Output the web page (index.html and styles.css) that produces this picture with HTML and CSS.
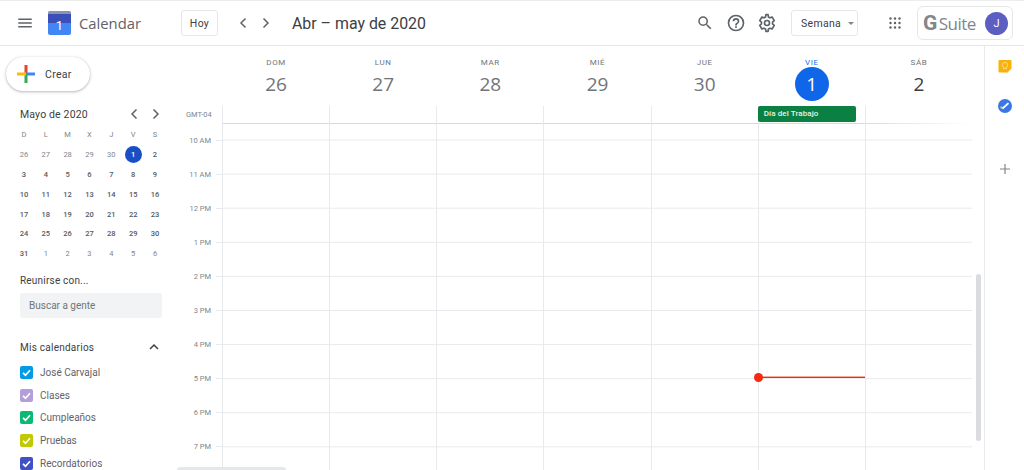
FILE: index.html
```html
<!DOCTYPE html>
<html lang="es">
<head>
<meta charset="utf-8">
<title>Calendar</title>
<link rel="stylesheet" href="styles.css">
</head>
<body>
<div class="app">
  <header class="topbar">
    <div class="brand">
      <button class="icon-btn menu" aria-label="Menú">
        <svg viewBox="0 0 24 24" width="18" height="18"><path d="M3 18h18v-2H3v2zm0-5h18v-2H3v2zm0-7v2h18V6H3z" fill="#5f6368"/></svg>
      </button>
      <svg class="logo" viewBox="0 0 23 24" width="23" height="24">
        <path d="M0 3h23v10H0z" fill="#3a50b8"/>
        <path d="M0 12h23v10a2 2 0 0 1-2 2H2a2 2 0 0 1-2-2z" fill="#4285f4"/>
        <path d="M1.500 0h20A1.500 1.500 0 0 1 23 1.500V3H0V1.500A1.500 1.500 0 0 1 1.500 0z" fill="#8a94ad"/>
        <text x="11.500" y="18.500" class="logo-num">1</text>
      </svg>
      <span class="brand-name">Calendar</span>
    </div>
    <button class="outline-btn today">Hoy</button>
    <div class="nav-arrows">
      <svg viewBox="0 0 10 14" width="10" height="14"><path d="M7.500 2.500 3 7l4.500 4.500" fill="none" stroke="#5f6368" stroke-width="1.500"/></svg>
      <svg viewBox="0 0 10 14" width="10" height="14"><path d="M2.500 2.500 7 7l-4.500 4.500" fill="none" stroke="#5f6368" stroke-width="1.500"/></svg>
    </div>
    <h1 class="range">Abr – may de 2020</h1>
    <div class="tools">
      <svg viewBox="0 0 24 24" width="18" height="18"><path d="M15.500 14h-.79l-.28-.27A6.470 6.470 0 0 0 16 9.500 6.500 6.500 0 1 0 9.500 16c1.610 0 3.090-.59 4.230-1.570l.27.28v.79l5 4.990L20.490 19l-4.990-5zm-6 0C7.010 14 5 11.990 5 9.500S7.010 5 9.500 5 14 7.010 14 9.500 11.990 14 9.500 14z" fill="#5f6368"/></svg>
      <svg viewBox="0 0 24 24" width="20" height="20"><path d="M11 18h2v-2h-2zm1-16a10 10 0 1 0 0 20 10 10 0 0 0 0-20zm0 18a8 8 0 1 1 0-16 8 8 0 0 1 0 16zm0-14a4 4 0 0 0-4 4h2a2 2 0 1 1 4 0c0 2-3 1.750-3 5h2c0-2.250 3-2.500 3-5a4 4 0 0 0-4-4z" fill="#5f6368"/></svg>
      <svg viewBox="0 0 24 24" width="20" height="20"><path d="M13.300 2h-2.600l-.4 2.700c-.7.300-1.300.600-1.900 1.100L5.900 4.800 3.300 9.200l2.100 1.700a8 8 0 0 0 0 2.200l-2.100 1.700 2.600 4.400 2.500-1c.6.500 1.200.8 1.900 1.100l.4 2.700h2.600l.4-2.700c.7-.3 1.300-.6 1.900-1.100l2.500 1 2.600-4.400-2.100-1.700a8 8 0 0 0 0-2.200l2.100-1.700-2.600-4.400-2.500 1c-.6-.5-1.200-.8-1.900-1.100z" fill="none" stroke="#5f6368" stroke-width="2" stroke-linejoin="round"/><circle cx="12" cy="12" r="3" fill="none" stroke="#5f6368" stroke-width="2"/></svg>
    </div>
    <button class="outline-btn view">Semana<span class="caret"></span></button>
    <svg class="apps" viewBox="0 0 12 12" width="12" height="12" fill="#5f6368">
      <circle cx="1.500" cy="1.500" r="1.200"/><circle cx="6" cy="1.500" r="1.200"/><circle cx="10.500" cy="1.500" r="1.200"/>
      <circle cx="1.500" cy="6" r="1.200"/><circle cx="6" cy="6" r="1.200"/><circle cx="10.500" cy="6" r="1.200"/>
      <circle cx="1.500" cy="10.500" r="1.200"/><circle cx="6" cy="10.500" r="1.200"/><circle cx="10.500" cy="10.500" r="1.200"/>
    </svg>
    <div class="account">
      <span class="gsuite"><b>G</b> Suite</span>
      <span class="avatar">J</span>
    </div>
  </header>

  <div class="main">
    <aside class="sidebar">
      <button class="create">
        <svg viewBox="0 0 18 18" width="18" height="18">
          <rect x="7.500" y="0" width="3" height="9" fill="#ea4335"/>
          <rect x="9" y="7.500" width="9" height="3" fill="#4285f4"/>
          <rect x="7.500" y="9" width="3" height="9" fill="#34a853"/>
          <rect x="0" y="7.500" width="9" height="3" fill="#fbbc05"/>
        </svg>
        Crear
      </button>
      <div class="mini-head">
        <span class="mini-title">Mayo de 2020</span>
        <div class="mini-arrows">
          <svg viewBox="0 0 10 14" width="10" height="14"><path d="M7.500 2.500 3 7l4.500 4.500" fill="none" stroke="#5f6368" stroke-width="1.500"/></svg>
          <svg viewBox="0 0 10 14" width="10" height="14"><path d="M2.500 2.500 7 7l-4.500 4.500" fill="none" stroke="#5f6368" stroke-width="1.500"/></svg>
        </div>
      </div>
      <div class="mini-grid">
        <span class="wd">D</span><span class="wd">L</span><span class="wd">M</span><span class="wd">X</span><span class="wd">J</span><span class="wd">V</span><span class="wd">S</span>
        <span class="off">26</span><span class="off">27</span><span class="off">28</span><span class="off">29</span><span class="off">30</span><span class="sel">1</span><span>2</span>
        <span>3</span><span>4</span><span>5</span><span>6</span><span>7</span><span>8</span><span>9</span>
        <span>10</span><span>11</span><span>12</span><span>13</span><span>14</span><span>15</span><span>16</span>
        <span>17</span><span>18</span><span>19</span><span>20</span><span>21</span><span>22</span><span>23</span>
        <span>24</span><span>25</span><span>26</span><span>27</span><span>28</span><span>29</span><span>30</span>
        <span>31</span><span class="off">1</span><span class="off">2</span><span class="off">3</span><span class="off">4</span><span class="off">5</span><span class="off">6</span>
      </div>
      <h2 class="meet-title">Reunirse con...</h2>
      <div class="people">Buscar a gente</div>
      <div class="cal-head">
        <h2>Mis calendarios</h2>
        <svg viewBox="0 0 12 8" width="12" height="8"><path d="M2 6l4-4 4 4" fill="none" stroke="#3c4043" stroke-width="1.500"/></svg>
      </div>
      <ul class="cal-list">
        <li><span class="check c-blue"><svg viewBox="0 0 13 13"><path d="M3 6.800l2.500 2.400L10 4.300" fill="none" stroke="#fff" stroke-width="1.700"/></svg></span>José Carvajal</li>
        <li><span class="check c-purple"><svg viewBox="0 0 13 13"><path d="M3 6.800l2.500 2.400L10 4.300" fill="none" stroke="#fff" stroke-width="1.700"/></svg></span>Clases</li>
        <li><span class="check c-green"><svg viewBox="0 0 13 13"><path d="M3 6.800l2.500 2.400L10 4.300" fill="none" stroke="#fff" stroke-width="1.700"/></svg></span>Cumpleaños</li>
        <li><span class="check c-lime"><svg viewBox="0 0 13 13"><path d="M3 6.800l2.500 2.400L10 4.300" fill="none" stroke="#fff" stroke-width="1.700"/></svg></span>Pruebas</li>
        <li><span class="check c-indigo"><svg viewBox="0 0 13 13"><path d="M3 6.800l2.500 2.400L10 4.300" fill="none" stroke="#fff" stroke-width="1.700"/></svg></span>Recordatorios</li>
      </ul>
    </aside>

    <section class="week">
      <div class="day-heads">
        <div class="day"><span class="dow">DOM</span><span class="num">26</span></div>
        <div class="day"><span class="dow">LUN</span><span class="num">27</span></div>
        <div class="day"><span class="dow">MAR</span><span class="num">28</span></div>
        <div class="day"><span class="dow">MIÉ</span><span class="num">29</span></div>
        <div class="day"><span class="dow">JUE</span><span class="num">30</span></div>
        <div class="day today-col"><span class="dow">VIE</span><span class="num">1</span></div>
        <div class="day future"><span class="dow">SÁB</span><span class="num">2</span></div>
      </div>
      <div class="allday">
        <span class="tz">GMT-04</span>
        <div class="allday-cols">
          <div class="ad"></div><div class="ad"></div><div class="ad"></div><div class="ad"></div><div class="ad"></div>
          <div class="ad"><div class="event">Día del Trabajo</div></div>
          <div class="ad"></div>
        </div>
      </div>
      <div class="timegrid">
        <div class="gutter">
          <span class="hour first">10 AM</span>
          <span class="hour">11 AM</span>
          <span class="hour">12 PM</span>
          <span class="hour">1 PM</span>
          <span class="hour">2 PM</span>
          <span class="hour">3 PM</span>
          <span class="hour">4 PM</span>
          <span class="hour">5 PM</span>
          <span class="hour">6 PM</span>
          <span class="hour">7 PM</span>
        </div>
        <div class="cols">
          <div class="col"></div><div class="col"></div><div class="col"></div><div class="col"></div><div class="col"></div>
          <div class="col current"><div class="now"></div></div>
          <div class="col"></div>
        </div>
        <div class="v-scroll"></div>
        <div class="h-scroll"></div>
      </div>
    </section>

    <aside class="rail">
      <svg class="keep" viewBox="0 0 14 14" width="14" height="14">
        <path d="M1.500 1h11a1 1 0 0 1 1 1v7.500L9.500 13.500H1.500a1 1 0 0 1-1-1V2a1 1 0 0 1 1-1z" fill="#f9b20c"/>
        <path d="M7 3.300a2.700 2.700 0 0 0-1.500 4.900v1.300h3V8.200A2.700 2.700 0 0 0 7 3.300z" fill="none" stroke="#fde293" stroke-width=".9"/>
      </svg>
      <svg class="tasks" viewBox="0 0 14 14" width="14" height="14">
        <circle cx="7" cy="7" r="7" fill="#3b78e7"/>
        <path d="M2.500 7.800l2.200 1.700" stroke="#fbbc04" stroke-width="1.800" fill="none"/>
        <path d="M4.500 9.500l6-5.300" stroke="#fff" stroke-width="1.800" fill="none"/>
      </svg>
      <svg class="add" viewBox="0 0 12 12" width="12" height="12"><path d="M6 1v10M1 6h10" stroke="#80868b" stroke-width="1.200" fill="none"/></svg>
    </aside>
  </div>
</div>
</body>
</html>
```
FILE: styles.css
```css
* { box-sizing: border-box; }
html, body { margin: 0; height: 100%; }
body {
  font-family: Roboto, "Liberation Sans", sans-serif;
  color: #3c4043;
  background: #fff;
  overflow: hidden;
}
button { font: inherit; color: inherit; background: none; border: 0; padding: 0; }
h1, h2, ul { margin: 0; padding: 0; font-weight: 400; list-style: none; }
.app { display: flex; flex-direction: column; height: 470px; border-top: 1px solid #eceded; }

.topbar {
  height: 45px;
  flex: none;
  display: flex;
  align-items: center;
  border-bottom: 1px solid #e6e7e9;
}
.brand { display: flex; align-items: center; width: 181px; flex: none; padding-left: 16px; }
.icon-btn { display: flex; }
.logo { margin-left: 14px; }
.logo-num { font-size: 13px; fill: #fff; text-anchor: middle; font-family: Roboto, sans-serif; }
.brand-name { margin-left: 8px; font-size: 14.800px; color: #5f6368; font-family: "Open Sans", sans-serif; }
.outline-btn {
  display: flex; align-items: center; height: 26px;
  border: 1px solid #e6e7e9; border-radius: 3px;
  font-size: 10.500px; color: #3c4043;
  letter-spacing: .3px;
}
.today { width: 37px; justify-content: center; }
.nav-arrows { display: flex; gap: 13px; margin-left: 20px; }
.range { margin-left: 21px; font-size: 15.900px; color: #3c4043; white-space: nowrap; }
.tools { margin-left: auto; display: flex; align-items: center; gap: 11.500px; }
.view { width: 67px; margin-left: 14px; padding-left: 9px; }
.caret { margin-left: 7px; border: 3px solid transparent; border-top: 3px solid #80868b; margin-top: 3px; }
.apps { margin-left: 31px; }
.account {
  display: flex; align-items: center; justify-content: space-between;
  width: 96px; height: 34px; margin: 0 11px 0 16px; padding: 0 4px 0 5px;
  border: 1px solid #e6e7e9; border-radius: 6px;
}
.gsuite { font-size: 17px; color: #80868b; font-family: "Open Sans", sans-serif; letter-spacing: -.5px; white-space: nowrap; }
.gsuite b { font-family: Roboto, sans-serif; font-size: 21px; line-height: 20px; font-weight: 700; color: #80868b; margin-right: -2px; }
.avatar {
  width: 23px; height: 23px; border-radius: 50%;
  display: flex; align-items: center; justify-content: center;
  background: #5c5ec2; color: #fff; font-size: 11px; flex: none;
}

.main { flex: 1; display: flex; min-height: 0; }

.sidebar { width: 176px; flex: none; padding: 11px 0 0 20px; overflow: hidden; }
.create {
  display: flex; align-items: center; gap: 10px;
  width: 84px; height: 34px; margin-left: -14px; padding-left: 11px;
  border-radius: 17px; background: #fff;
  font-size: 10.500px; color: #3c4043; letter-spacing: .3px;
  box-shadow: 0 1px 3px rgba(60,64,67,.35), 0 0 1px rgba(60,64,67,.2);
}
.mini-head {
  display: flex; align-items: center; justify-content: space-between;
  width: 141px; margin-top: 14px; height: 18px;
}
.mini-title { font-size: 10.500px; color: #3c4043; letter-spacing: .15px; }
.mini-arrows { display: flex; gap: 12px; }
.mini-grid {
  display: grid;
  grid-template-columns: repeat(7, 21.850px);
  grid-auto-rows: 19.900px;
  width: 154px;
  margin: 2px 0 0 -7px;
  font-size: 7.500px;
  font-weight: 500;
  color: #55595d;
  text-align: center;
  line-height: 19.900px;
}
.mini-grid .wd { color: #80868b; font-weight: 400; }
.mini-grid .off { color: #80868b; font-weight: 400; }
.mini-grid .sel {
  width: 17px; height: 17px; line-height: 17px; margin: 1.500px auto 0;
  border-radius: 50%; background: #1a4fc4; color: #fff;
}
.meet-title { margin-top: 10px; font-size: 10px; color: #3c4043; letter-spacing: .2px; line-height: 13px; }
.people {
  width: 142px; height: 25px; margin-top: 6px; padding-left: 9px;
  border-radius: 3px; background: #f1f3f4;
  font-size: 10px; line-height: 25px; color: #70757a;
}
.cal-head {
  display: flex; align-items: center; justify-content: space-between;
  width: 140px; margin-top: 22px; height: 14px;
}
.cal-head h2 { font-size: 10px; letter-spacing: .25px; color: #3c4043; }
.cal-list { margin-top: 7px; }
.cal-list li {
  display: flex; align-items: center; gap: 7px;
  height: 22.700px;
  font-size: 10px; color: #5f6368; white-space: nowrap;
}
.check { width: 13px; height: 13px; border-radius: 2px; display: flex; flex: none; }
.check svg { width: 13px; height: 13px; }
.c-blue { background: #039be5; }
.c-purple { background: #b39ddb; }
.c-green { background: #0bb974; }
.c-lime { background: #c0ca00; }
.c-indigo { background: #3f51c5; }

.week { width: 808px; flex: none; display: flex; flex-direction: column; min-height: 0; }
.day-heads { display: grid; grid-template-columns: repeat(7, 107.150px); height: 60px; margin-left: 46.500px; flex: none; }
.day { display: flex; flex-direction: column; align-items: center; }
.dow { margin-top: 11px; font-size: 8px; letter-spacing: .6px; color: #70757a; line-height: 11px; }
.num { font-size: 19px; line-height: 24px; margin-top: 4px; color: #70757a; font-family: "Open Sans", sans-serif; font-weight: 400; }
.today-col .dow { color: #1a73e8; }
.today-col .num {
  width: 34px; height: 34px; margin-top: -1px; border-radius: 50%;
  background: #0f66e9; color: #fff; line-height: 34px; text-align: center;
}
.future .num { color: #3c4043; }

.allday { display: flex; height: 18px; flex: none; }
.tz { width: 46px; padding: 4px 0 0 10px; font-size: 7.500px; color: #80868b; line-height: 9px; }
.allday-cols {
  flex: none; width: 750px; display: grid; grid-template-columns: repeat(7, 107.150px);
  background: linear-gradient(to right, #d8d9dc 85%, #fff 100%) bottom / 100% 1px no-repeat;
}
.ad { border-left: 1px solid #e8e9ec; }
.event {
  width: 98px; height: 16px; margin-left: -1px; padding-left: 6px;
  border-radius: 2px; background: #0b8043; color: #e7f3ec;
  font-size: 8px; font-weight: 500; line-height: 16px; letter-spacing: .1px;
  white-space: nowrap;
}

.timegrid { flex: 1; display: flex; min-height: 0; position: relative; }
.gutter { width: 46px; flex: none; display: flex; flex-direction: column; }
.hour {
  height: 34.100px; flex: none;
  display: flex; align-items: center; justify-content: flex-end;
  padding-right: 11px;
  font-size: 7.500px; color: #80868b;
  background: linear-gradient(#e8e9ec, #e8e9ec) right 0 top 50% / 6px 1px no-repeat;
}
.hour.first { margin-top: -1px; }
.cols {
  flex: none; width: 750px;
  display: grid; grid-template-columns: repeat(7, 107.150px);
  background: linear-gradient(to top, #e8e9ec 1px, transparent 1px) 0 -17.600px / 100% 34.100px;
}
.col { border-left: 1px solid #e8e9ec; position: relative; }
.now {
  position: absolute; left: -1px; right: 0; top: 253px;
  height: 1px; background: #f4290f; box-shadow: 0 -1px 0 rgba(244, 41, 15, .4);
}
.now::before {
  content: ""; position: absolute; left: -4px; top: -4px;
  width: 9px; height: 9px; border-radius: 50%; background: #f4290f;
}
.v-scroll {
  position: absolute; left: 800px; top: 150px;
  width: 5px; height: 167px; border-radius: 3px; background: #dadce0;
}
.h-scroll {
  position: absolute; left: 1px; top: 343px;
  width: 109px; height: 3px; border-radius: 3px 3px 0 0; background: #e6e7ea;
}

.rail {
  flex: 1; display: flex; flex-direction: column; align-items: center;
  padding-top: 13px; border-left: 1px solid #e8e9ec;
}
.tasks { margin-top: 26px; }
.add { margin-top: 50px; }
```
